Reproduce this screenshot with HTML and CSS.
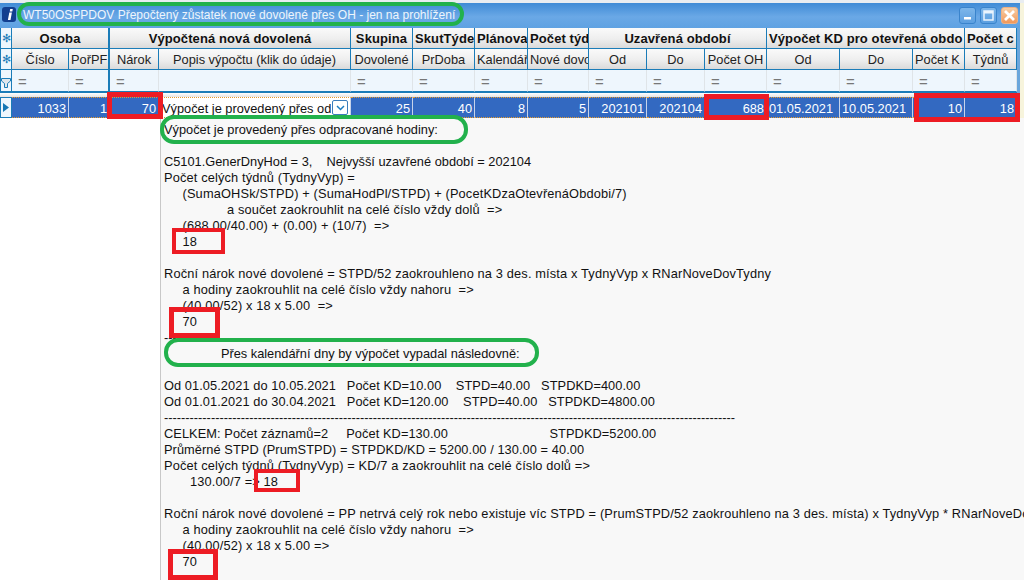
FILE: index.html
```html
<!DOCTYPE html>
<html lang="cs">
<head>
<meta charset="utf-8">
<title>WT50OSPPDOV</title>
<link rel="stylesheet" href="styles.css">
</head>
<body>
<div class="window">
  <div class="behind"></div>
  <div class="titlebar">
    <svg class="app-icon" width="14" height="15" viewBox="0 0 14 15"><rect width="14" height="15" rx="3" fill="#123f8f"/><path d="M8.200 2h2.600l-.5 2.400H7.700zM7.300 5.600h2.600L8.500 13H5.900z" fill="#fff"/></svg>
    <span class="title-text">WT50OSPPDOV Přepočtený zůstatek nové dovolené přes OH - jen na prohlížení</span>
    <div class="win-buttons">
      <span class="win-btn"><svg width="9" height="11" viewBox="0 0 9 11"><rect x="1" y="7" width="7" height="2.500" fill="#fff"/></svg></span>
      <span class="win-btn"><svg width="11" height="11" viewBox="0 0 11 11"><rect x="1" y="1" width="9" height="9" fill="none" stroke="#eaf4fd" stroke-width="1.500"/><rect x="1" y="1" width="9" height="2.500" fill="#eaf4fd"/></svg></span>
      <span class="win-btn close"><svg width="13" height="13" viewBox="0 0 13 13"><path d="M2 2l9 9M11 2l-9 9" stroke="#fff" stroke-width="2.800"/></svg></span>
    </div>
  </div>
  <div class="body-frame">
  <div class="grid">
    <div class="sel">✻</div>
    <div class="gh band c-osoba">Osoba</div>
    <div class="gh band c-vyp">Výpočtená nová dovolená</div>
    <div class="gh band">Skupina</div>
    <div class="gh band clip">SkutTýde</div>
    <div class="gh band clip">Plánova</div>
    <div class="gh band clip">Počet týd</div>
    <div class="gh band c-uz">Uzavřená období</div>
    <div class="gh band c-kd clip">Výpočet KD pro otevřená obdo</div>
    <div class="gh band clip">Počet c</div>

    <div class="sel">✻</div>
    <div class="gh">Číslo</div>
    <div class="gh thick clip">PořPF</div>
    <div class="gh">Nárok</div>
    <div class="gh">Popis výpočtu (klik do údaje)</div>
    <div class="gh">Dovolené</div>
    <div class="gh">PrDoba</div>
    <div class="gh clip">Kalendář</div>
    <div class="gh clip">Nové dovo</div>
    <div class="gh">Od</div>
    <div class="gh">Do</div>
    <div class="gh">Počet OH</div>
    <div class="gh">Od</div>
    <div class="gh">Do</div>
    <div class="gh clip">Počet K</div>
    <div class="gh">Týdnů</div>

    <div class="sel filter-icon"><svg width="10" height="10" viewBox="0 0 10 10"><path d="M.5.5h9v2.500L6.500 5.500v4h-3v-4L.5 3z" fill="#dfe6ec" stroke="#1b7cb8"/></svg></div>
    <div class="fc">=</div>
    <div class="fc thick">=</div>
    <div class="fc">=</div>
    <div class="fc"></div>
    <div class="fc">=</div>
    <div class="fc">=</div>
    <div class="fc">=</div>
    <div class="fc">=</div>
    <div class="fc">=</div>
    <div class="fc">=</div>
    <div class="fc">=</div>
    <div class="fc">=</div>
    <div class="fc">=</div>
    <div class="fc">=</div>
    <div class="fc">=</div>
  </div>

  <div class="data-gap"></div>

  <div class="grid row">
    <div class="sel row-sel"><svg width="6" height="9" viewBox="0 0 6 9"><path d="M0 0l6 4.500L0 9z" fill="#1677b5"/></svg></div>
    <div class="dc">1033</div>
    <div class="dc">1</div>
    <div class="dc">70</div>
    <div class="dc memo"><span class="memo-text">Výpočet je provedený přes od</span><span class="combo"><svg width="9" height="6" viewBox="0 0 9 6"><path d="M1 1l3.500 3.500L8 1" fill="none" stroke="#1d7cc0" stroke-width="1.500"/></svg></span></div>
    <div class="dc">25</div>
    <div class="dc">40</div>
    <div class="dc">8</div>
    <div class="dc">5</div>
    <div class="dc">202101</div>
    <div class="dc">202104</div>
    <div class="dc">688</div>
    <div class="dc date">01.05.2021</div>
    <div class="dc date">10.05.2021</div>
    <div class="dc">10</div>
    <div class="dc">18</div>
  </div>
  </div>

  <div class="lower">
    <pre class="popup">Výpočet je provedený přes odpracované hodiny:

C5101.GenerDnyHod = 3,    Nejvyšší uzavřené období = 202104
<span class="wide">Počet celých týdnů (TydnyVyp) =
     (SumaOHSk/STPD) + (SumaHodPl/STPD) + (PocetKDzaOtevřenáObdobi/7)
                 a součet zaokrouhlit na celé číslo vždy dolů  =&gt;
     (688.00/40.00) + (0.00) + (10/7)  =&gt;
     18

Roční nárok nové dovolené = STPD/52 zaokrouhleno na 3 des. místa x TydnyVyp x RNarNoveDovTydny
     a hodiny zaokrouhlit na celé číslo vždy nahoru  =&gt;
     (40.00/52) x 18 x 5.00  =&gt;
     70</span>
----------------------------------------------------------------------------------
                Přes kalendářní dny by výpočet vypadal následovně:

<span class="wide-s">Od 01.05.2021 do 10.05.2021   Počet KD=10.00    STPD=40.00   STPDKD=400.00
Od 01.01.2021 do 30.04.2021   Počet KD=120.00    STPD=40.00   STPDKD=4800.00</span>
--------------------------------------------------------------------------------------------------------------------------------------
<span class="wide-s">CELKEM: Počet záznamů=2     Počet KD=130.00                            STPDKD=5200.00
Průměrné STPD (PrumSTPD) = STPDKD/KD = 5200.00 / 130.00 = 40.00</span>
<span class="wide">Počet celých týdnů (TydnyVyp) = KD/7 a zaokrouhlit na celé číslo dolů =&gt;
       130.00/7 =&gt; 18

Roční nárok nové dovolené = PP netrvá celý rok nebo existuje víc STPD = (PrumSTPD/52 zaokrouhleno na 3 des. místa) x TydnyVyp * RNarNoveDovTydny
     a hodiny zaokrouhlit na celé číslo vždy nahoru  =&gt;
     (40.00/52) x 18 x 5.00 =&gt;
     70</span></pre>
  </div>
</div>

<div class="edge"></div>
<div class="mark red r1"></div>
<div class="mark red r2"></div>
<div class="mark red r3"></div>
<div class="mark red r4"></div>
<div class="mark red r5"></div>
<div class="mark red r6"></div>
<div class="mark red r7"></div>
<div class="mark green g1"></div>
<div class="mark green g2"></div>
<div class="mark green g3"></div>
</body>
</html>
```
FILE: styles.css
```css
* { box-sizing: border-box; }
html, body { margin: 0; padding: 0; }
body {
  position: relative;
  width: 1024px;
  height: 580px;
  overflow: hidden;
  background: #fff;
  font-family: "Liberation Sans", Arial, sans-serif;
  font-size: 12.8px;
  color: #111;
}
.window { height: 580px; display: flex; flex-direction: column; overflow: hidden; }
.behind { height: 3px; flex: none; background: #e9edf1; }
.edge { position: absolute; left: 1020px; top: 3px; width: 4px; height: 115px; background: #f7f4dc; }
.titlebar {
  height: 25px;
  width: 1020px;
  flex: none;
  display: flex;
  align-items: center;
  padding: 0 0 2px 2px;
  gap: 7px;
  background: linear-gradient(#3f8bd6, #6aa8e6 55%, #5fa2e2);
  color: #eef5fc;
  font-size: 12px;
}
.title-text { white-space: pre; }
.win-buttons { margin-left: auto; display: flex; gap: 4px; padding-right: 2px; padding-top: 2px; }
.win-btn {
  width: 17px; height: 17px;
  border: 1px solid #3a84cc;
  border-radius: 3px;
  background: linear-gradient(#7db6ea, #5c9fe0);
  display: flex; align-items: center; justify-content: center;
}
.win-btn.close { background: linear-gradient(#f8cfa6, #f0975a); border-color: #eeb184; }
.body-frame { width: 1020px; flex: none; border-right: 3px solid #6aa6dc; }
.grid {
  display: grid;
  grid-template-columns: 12px 57px 41px 49px 192px 62px 62px 53px 61px 58px 58px 62px 73px 73px 52px 52px;
  grid-template-rows: 21px 21px 22px;
  width: 1017px;
  background: #1b7cb8;
  border-bottom: 1px solid #1b7cb8;
}
.sel {
  display: flex; align-items: center; justify-content: center;
  background: #eef6fd;
  border: 1px solid #1b7cb8;
  border-width: 0 1px 1px 1px;
  color: #1b7cb8;
  font-size: 11px;
}
.filter-icon { padding-top: 5px; }
.gh {
  display: flex; align-items: center; justify-content: center;
  white-space: nowrap;
  overflow: hidden;
  background: linear-gradient(#fafafa, #eeeeee 55%, #dadada);
  border-right: 1px solid #1b7cb8;
  border-bottom: 1px solid #1b7cb8;
  color: #222;
}
.gh.clip { justify-content: flex-start; padding-left: 2px; }
.band { font-weight: bold; color: #111; font-size: 13px; letter-spacing: .1px; }
.c-osoba { grid-column: span 2; border-right-width: 2px; }
.c-vyp { grid-column: span 2; }
.c-uz { grid-column: span 3; }
.c-kd { grid-column: span 3; }
.thick { border-right-width: 2px; }
.fc {
  background: #eef6fd;
  color: #777;
  padding: 4px 0 0 6px;
  border-right: 1px solid #dfe4e8;
  border-bottom: 1px solid #1b7cb8;
  font-size: 15px;
  line-height: 16px;
}
.fc.thick { border-right: 2px solid #1b7cb8; }
.data-gap { height: 4px; background: linear-gradient(#fff, #e4e4e4); width: 1017px; }
.row {
  grid-template-rows: 21px;
  background: #3369c1;
  border: 0;
  color: #fff;
}
.row-sel { border-width: 1px; }
.dc {
  text-align: right;
  padding: 2px 2px 0 0;
  white-space: nowrap;
  overflow: hidden;
  line-height: 17px;
  border-right: 1px solid #c7d3ea;
  border-top: 1px dotted #e59a2e;
  border-bottom: 1px dotted #e59a2e;
}
.dc.date { text-align: left; padding-left: 2px; }
.memo {
  background: #fff;
  color: #111;
  text-align: left;
  padding: 2px 0 0 3px;
  display: flex;
  justify-content: space-between;
}
.memo-text { overflow: hidden; }
.combo {
  width: 16px; height: 15px; margin-right: 2px;
  border: 1px solid #3b7dbb;
  border-radius: 2px;
  background: #fff;
  display: flex; align-items: center; justify-content: center;
  flex: none;
}
.lower { flex: 1; padding-left: 160px; min-height: 0; }
.popup {
  margin: 0;
  height: 100%;
  padding: 4px 0 0 3px;
  font: 12.8px/16px "Liberation Sans", Arial, sans-serif;
  background: #f8f8f8;
  border-left: 1px solid #c8c8c8;
  white-space: pre;
  overflow: hidden;
  color: #111;
}
.wide { letter-spacing: .15px; }
.wide-s { letter-spacing: .07px; }
.mark { position: absolute; }
.red { border: 5px solid #ed1c24; }
.r1 { left: 107px; top: 92px; width: 56px; height: 27px; }
.r2 { left: 704px; top: 94px; width: 65px; height: 26px; }
.r3 { left: 914px; top: 93px; width: 106px; height: 29px; }
.r4 { left: 172px; top: 228px; width: 53px; height: 26px; border-width: 4px; }
.r5 { left: 169px; top: 307px; width: 51px; height: 31px; }
.r6 { left: 254px; top: 469px; width: 46px; height: 23px; border-width: 4px; }
.r7 { left: 168px; top: 549px; width: 50px; height: 31px; }
.green { border: 4px solid #22b14c; }
.g1 { left: 17px; top: 2px; width: 447px; height: 24px; border-radius: 12px; }
.g2 { left: 160px; top: 115px; width: 308px; height: 29px; border-radius: 14px; }
.g3 { left: 164px; top: 338px; width: 375px; height: 29px; border-radius: 14px; }
```
